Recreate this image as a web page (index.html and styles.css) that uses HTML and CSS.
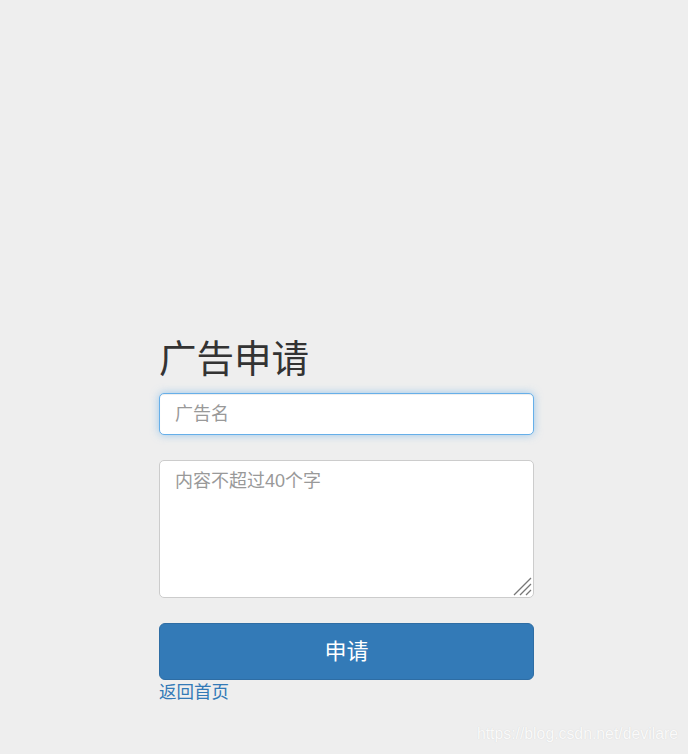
FILE: index.html
```html
<!DOCTYPE html>
<html lang="zh">
<head>
<meta charset="utf-8">
<title>广告申请</title>
<link rel="stylesheet" href="styles.css">
</head>
<body>
<main class="page">
  <form class="apply-form">
    <h2 class="title">广告申请</h2>
    <input class="field field-focus" type="text" placeholder="广告名">
    <div class="area-wrap">
      <textarea class="field area" placeholder="内容不超过40个字"></textarea>
      <svg class="grip" width="20" height="20" viewBox="0 0 20 20" aria-hidden="true">
        <path d="M2 19 L19 2 M8 19 L19 8 M14 19 L19 14" stroke="#777" stroke-width="1.3" fill="none"/>
      </svg>
    </div>
    <button class="btn-primary" type="button">申请</button>
    <a class="back-link" href="#">返回首页</a>
  </form>
</main>
<div class="watermark">https://blog.csdn.net/devilare</div>
</body>
</html>
```

FILE: styles.css
```css
html, body {
  margin: 0;
  padding: 0;
  height: 100%;
}
body {
  background: #eeeeee;
  font-family: "Liberation Sans", Arial, "Noto Sans CJK SC", sans-serif;
  color: #333;
  position: relative;
  overflow: hidden;
}
.page {
  padding: 335px 0 0 159px;
}
.apply-form {
  width: 375px;
  display: flex;
  flex-direction: column;
}
.title {
  margin: 0;
  font-size: 37.5px;
  line-height: 41px;
  font-weight: 400;
  color: #333;
  font-family: "Noto Sans CJK SC", sans-serif;
}
.field {
  box-sizing: border-box;
  width: 375px;
  border: 1px solid #ccc;
  border-radius: 5px;
  background: #fff;
  font-size: 18px;
  font-family: "Liberation Sans", "Noto Sans CJK SC", sans-serif;
  color: #555;
  padding: 0 15px;
  outline: none;
  margin: 0;
}
.field::placeholder {
  color: #999;
}
.field-focus {
  margin-top: 17px;
  height: 42px;
  border-color: #66afe9;
  box-shadow: inset 0 1px 1px rgba(0,0,0,.075), 0 0 8px rgba(102,175,233,.6);
}
.area-wrap {
  position: relative;
  margin-top: 25px;
  height: 138px;
}
.area {
  display: block;
  height: 138px;
  padding-top: 8px;
  line-height: 24px;
  resize: none;
}
.grip {
  position: absolute;
  right: 2px;
  bottom: 2px;
}
.btn-primary {
  margin-top: 25px;
  height: 57px;
  box-sizing: border-box;
  width: 375px;
  background: #337ab7;
  border: 1px solid #2e6da4;
  border-radius: 6px;
  color: #fff;
  font-size: 22px;
  font-family: "Noto Sans CJK SC", sans-serif;
  cursor: pointer;
  padding: 0 0 5px;
}
.back-link {
  align-self: flex-start;
  color: #337ab7;
  text-decoration: none;
  font-size: 17.5px;
  line-height: 22px;
  font-family: "Noto Sans CJK SC", sans-serif;
}
.watermark {
  position: absolute;
  right: 10px;
  bottom: 11px;
  font-size: 15.8px;
  color: #fafafa;
  text-shadow: 0 0 1px #d0d0d0;
  font-family: "Liberation Sans", Arial, sans-serif;
}
```
